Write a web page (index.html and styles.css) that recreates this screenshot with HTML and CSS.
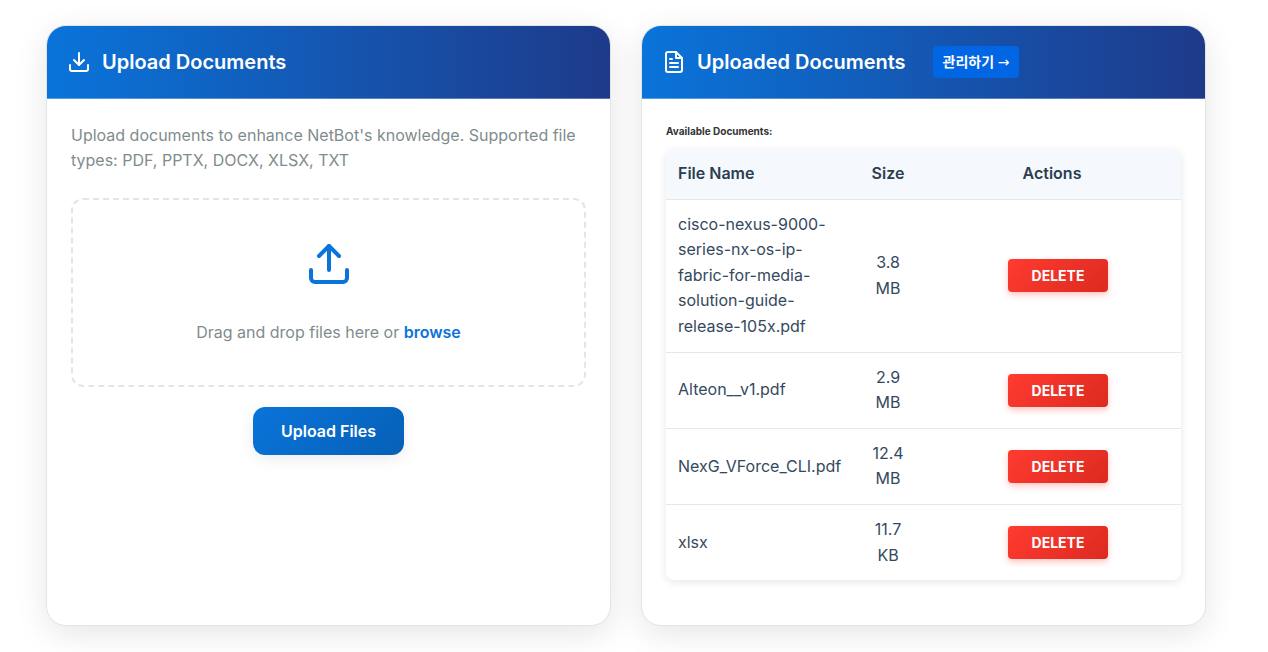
FILE: index.html
```html
<!DOCTYPE html>
<html lang="en">
<head>
<meta charset="utf-8">
<meta name="viewport" content="width=device-width, initial-scale=1">
<title>NetBot Documents</title>
<link rel="stylesheet" href="styles.css">
</head>
<body>
<main class="panels">
  <section class="card">
    <header class="card-header">
      <svg class="header-icon" viewBox="0 0 24 24" aria-hidden="true"><path d="M21 15v4a2 2 0 0 1-2 2H5a2 2 0 0 1-2-2v-4"/><path d="M7 10l5 5 5-5"/><path d="M12 15V3"/></svg>
      <h2 class="card-title">Upload Documents</h2>
    </header>
    <div class="card-body">
      <p class="intro">Upload documents to enhance NetBot's knowledge. Supported file types: PDF, PPTX, DOCX, XLSX, TXT</p>
      <div class="dropzone">
        <svg class="drop-icon" viewBox="0 0 24 24" aria-hidden="true"><path d="M21 15v4a2 2 0 0 1-2 2H5a2 2 0 0 1-2-2v-4"/><path d="M17 8l-5-5-5 5"/><path d="M12 3v12"/></svg>
        <p class="drop-text">Drag and drop files here or <a class="browse" href="#">browse</a></p>
      </div>
      <button class="upload-button" type="button">Upload Files</button>
    </div>
  </section>

  <section class="card">
    <header class="card-header">
      <svg class="header-icon" viewBox="0 0 24 24" aria-hidden="true"><path d="M14 2H6a2 2 0 0 0-2 2v16a2 2 0 0 0 2 2h12a2 2 0 0 0 2-2V8z"/><path d="M14 2v6h6"/><path d="M16 13H8"/><path d="M16 17H8"/><path d="M10 9H8"/></svg>
      <h2 class="card-title">Uploaded Documents</h2>
      <a class="manage" href="#" lang="ko">관리하기 <span class="arrow">→</span></a>
    </header>
    <div class="card-body">
      <h3 class="list-title" id="list-title">Available Documents:</h3>
      <table class="files" aria-labelledby="list-title">
        <thead>
          <tr><th class="col-name">File Name</th><th class="col-size">Size</th><th class="col-actions">Actions</th></tr>
        </thead>
        <tbody>
          <tr><td class="col-name">cisco-nexus-9000-series-nx-os-ip-fabric-for-media-solution-guide-release-105x.pdf</td><td class="col-size">3.8 MB</td><td class="col-actions"><button class="delete" type="button">DELETE</button></td></tr>
          <tr><td class="col-name">Alteon__v1.pdf</td><td class="col-size">2.9 MB</td><td class="col-actions"><button class="delete" type="button">DELETE</button></td></tr>
          <tr><td class="col-name">NexG_VForce_CLI.pdf</td><td class="col-size">12.4 MB</td><td class="col-actions"><button class="delete" type="button">DELETE</button></td></tr>
          <tr><td class="col-name">xlsx</td><td class="col-size">11.7 KB</td><td class="col-actions"><button class="delete" type="button">DELETE</button></td></tr>
        </tbody>
      </table>
    </div>
  </section>
</main>
</body>
</html>
```
FILE: styles.css
```css
* { box-sizing: border-box; }

body {
  margin: 0;
  background: #fff;
  color: #34495e;
  font-family: Inter, "Noto Sans CJK KR", sans-serif;
  font-size: 16px;
  line-height: 1.6;
}

h2, h3, p { margin: 0; }

.panels {
  display: grid;
  grid-template-columns: 1fr 1fr;
  gap: 30px;
  padding: 25px 62px 26px 46px;
}

.card {
  display: flex;
  flex-direction: column;
  overflow: hidden;
  border: 1px solid #e4e4e4;
  border-radius: 20px;
  background: #fff;
  box-shadow: 0 8px 32px rgba(0, 0, 0, 0.1);
}

.card-header {
  display: flex;
  align-items: center;
  gap: 11px;
  padding: 20px;
  border-bottom: 1px solid rgba(255, 255, 255, 0.3);
  background: linear-gradient(90deg, #0a74da, #1e3a8a);
  color: #fff;
}

.header-icon, .drop-icon {
  fill: none;
  stroke: currentColor;
  stroke-width: 2;
  stroke-linecap: round;
  stroke-linejoin: round;
}

.header-icon { width: 24px; height: 24px; }

.card-title {
  font-size: 20px;
  font-weight: 600;
  line-height: 32px;
}

.manage {
  margin-left: 16px;
  padding: 0 10px;
  border-radius: 4px;
  background: #0066e3;
  color: #fff;
  font-size: 14px;
  font-weight: 600;
  line-height: 32px;
  text-decoration: none;
}

.arrow {
  font-family: "DejaVu Sans", sans-serif;
  font-weight: 400;
  line-height: 1;
}

.card-body {
  flex: 1;
  display: flex;
  flex-direction: column;
  padding: 24px 24px 45px;
}

.intro { color: #7f8c8d; line-height: 25px; }

.dropzone {
  display: flex;
  flex-direction: column;
  align-items: center;
  gap: 32px;
  margin-top: 25px;
  padding: 40px;
  border: 2px dashed #e5e5e5;
  border-radius: 12px;
}

.drop-icon { width: 48px; height: 48px; color: #0a74da; }

.drop-text { color: #7f8c8d; line-height: 25px; }

.browse { color: #0a74da; font-weight: 600; text-decoration: none; }

.upload-button {
  align-self: center;
  margin-top: 20px;
  padding: 0 28px;
  border: 0;
  border-radius: 12px;
  background: linear-gradient(135deg, #0a74da, #0660b6);
  box-shadow: 0 4px 16px rgba(0, 0, 0, 0.08);
  color: #fff;
  font: inherit;
  font-weight: 600;
  line-height: 48px;
}

.list-title {
  margin-bottom: 9px;
  color: #333;
  font-size: 10px;
  font-weight: 700;
  line-height: 17px;
}

.files {
  width: 100%;
  table-layout: fixed;
  border-collapse: separate;
  border-spacing: 0;
  border-radius: 8px;
  box-shadow: 0 2px 8px rgba(0, 0, 0, 0.1);
  overflow: hidden;
}

.files th, .files td {
  padding: 12px;
  border-bottom: 1px solid #e5e7eb;
  text-align: center;
  vertical-align: middle;
}

.files th { background: #f5f8fd; color: #2c3e50; font-weight: 600; }

.files tr:last-child td { border-bottom: 0; }

.files .col-name { text-align: left; }
.files .col-size { width: 94px; padding-left: 24px; padding-right: 24px; }
.files .col-actions { width: 246px; }
.files th.col-actions { padding-right: 24px; }

.delete {
  width: 100px;
  padding: 0;
  border: 0;
  border-radius: 4px;
  background: linear-gradient(135deg, #ff3b30, #dc2a20);
  box-shadow: 0 3px 6px rgba(255, 59, 48, 0.3);
  color: #fff;
  font: inherit;
  font-size: 14px;
  font-weight: 700;
  line-height: 33px;
}
```
